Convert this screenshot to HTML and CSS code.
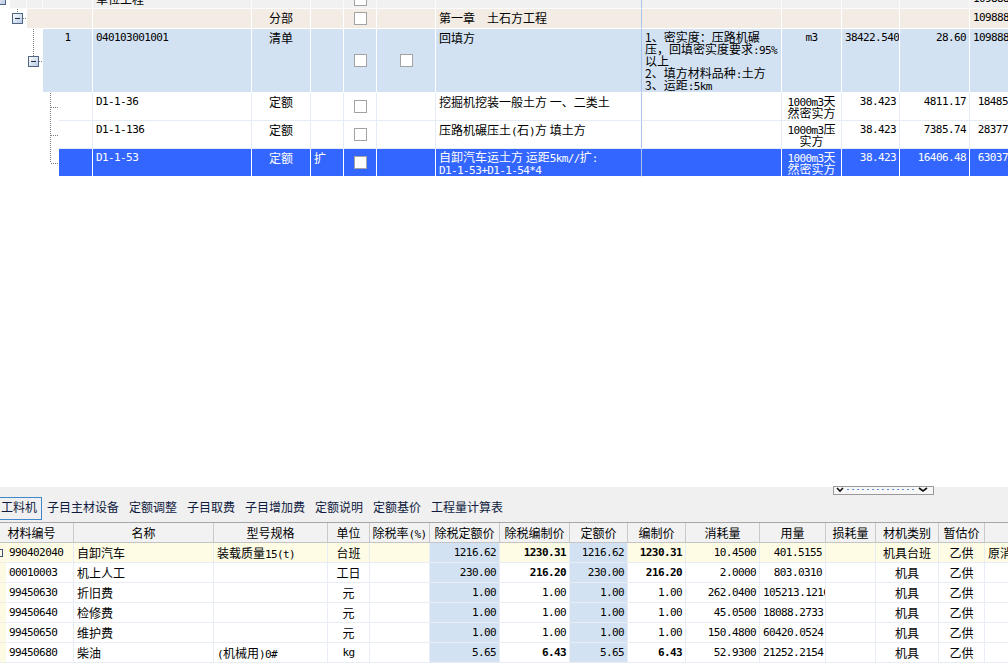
FILE: index.html
```html
<!DOCTYPE html>
<html lang="zh-CN">
<head>
<meta charset="utf-8">
<title>分部分项</title>
<link rel="stylesheet" href="styles.css">
</head>
<body>
<div class="screen">
  <div class="tree-grid">
    <div class="row r0 h19">
      <div class="t"><svg width="10" height="19"><defs><linearGradient id="g0" x1="0" y1="0" x2="1" y2="1"><stop offset="0" stop-color="#ffffff"/><stop offset="1" stop-color="#b6c8e2"/></linearGradient></defs><rect x="-4.5" y="4.5" width="10" height="10" fill="url(#g0)" stroke="#4f6584"/><line x1="-1" y1="9.5" x2="4" y2="9.5" stroke="#1c2a48"/></svg></div>
      <div class="c"></div>
      <div class="c"></div>
      <div class="c s2"></div>
      <div class="c">单位工程</div>
      <div class="c"></div>
      <div class="c"></div>
      <div class="c cbc"><span class="cb"></span></div>
      <div class="c"></div>
      <div class="c dl"></div>
      <div class="c"></div>
      <div class="c"></div>
      <div class="c"></div>
      <div class="c"></div>
      <div class="c rt a">1098884.64</div>
    </div>
    <div class="row r1 h20">
      <div class="t s2"><svg width="27" height="20"><defs><linearGradient id="g1" x1="0" y1="0" x2="1" y2="1"><stop offset="0" stop-color="#ffffff"/><stop offset="1" stop-color="#b6c8e2"/></linearGradient></defs><line x1="17.5" y1="0" x2="17.5" y2="4" class="dot"/><rect x="12.5" y="4.5" width="10" height="10" fill="url(#g1)" stroke="#4f6584"/><line x1="15" y1="9.5" x2="20" y2="9.5" stroke="#1c2a48"/><line x1="23" y1="9.5" x2="27" y2="9.5" class="dot"/></svg></div>
      <div class="c s3"></div>
      <div class="c"></div>
      <div class="c ct">分部</div>
      <div class="c"></div>
      <div class="c cbc"><span class="cb"></span></div>
      <div class="c"></div>
      <div class="c dl">第一章　土石方工程</div>
      <div class="c"></div>
      <div class="c"></div>
      <div class="c"></div>
      <div class="c"></div>
      <div class="c rt a">1098884.64</div>
    </div>
    <div class="row r2 h64">
      <div class="t s3"><svg width="43" height="64"><defs><linearGradient id="g2" x1="0" y1="0" x2="1" y2="1"><stop offset="0" stop-color="#ffffff"/><stop offset="1" stop-color="#b6c8e2"/></linearGradient></defs><line x1="33.5" y1="0" x2="33.5" y2="27" class="dot"/><rect x="28.5" y="27.5" width="10" height="10" fill="url(#g2)" stroke="#4f6584"/><line x1="31" y1="32.5" x2="36" y2="32.5" stroke="#1c2a48"/><line x1="39" y1="32.5" x2="43" y2="32.5" class="dot"/></svg></div>
      <div class="c s2 ct a">1</div>
      <div class="c a">040103001001</div>
      <div class="c ct">清单</div>
      <div class="c"></div>
      <div class="c cbc"><span class="cb"></span></div>
      <div class="c cbc"><span class="cb"></span></div>
      <div class="c dl">回填方</div>
      <div class="c ml"><span class="ln">1、密实度：压路机碾</span><span class="ln">压，回填密实度要求<span class="a">:95%</span></span><span class="ln">以上</span><span class="ln">2、填方材料品种<span class="a">:</span>土方</span><span class="ln">3、运距<span class="a">:5km</span></span></div>
      <div class="c ct a">m3</div>
      <div class="c rt a">38422.540</div>
      <div class="c rt a">28.60</div>
      <div class="c rt a">1098884.64</div>
    </div>
    <div class="row rw h28">
      <div class="t s4"><svg width="59" height="28"><line x1="50.5" y1="0" x2="50.5" y2="28" class="dot"/><line x1="51" y1="14.5" x2="58" y2="14.5" class="dot"/></svg></div>
      <div class="c"></div>
      <div class="c a">D1-1-36</div>
      <div class="c ct">定额</div>
      <div class="c"></div>
      <div class="c cbc"><span class="cb"></span></div>
      <div class="c"></div>
      <div class="c dl">挖掘机挖装一般土方 一、二类土</div>
      <div class="c"></div>
      <div class="c ct ml"><span class="ln"><span class="a">1000m3</span>天</span><span class="ln">然密实方</span></div>
      <div class="c rt a">38.423</div>
      <div class="c rt a">4811.17</div>
      <div class="c rt a">184859.58</div>
    </div>
    <div class="row rw h28">
      <div class="t s4"><svg width="59" height="28"><line x1="50.5" y1="0" x2="50.5" y2="28" class="dot"/><line x1="51" y1="14.5" x2="58" y2="14.5" class="dot"/></svg></div>
      <div class="c"></div>
      <div class="c a">D1-1-136</div>
      <div class="c ct">定额</div>
      <div class="c"></div>
      <div class="c cbc"><span class="cb"></span></div>
      <div class="c"></div>
      <div class="c dl">压路机碾压土<span class="a">(</span>石<span class="a">)</span>方 填土方</div>
      <div class="c"></div>
      <div class="c ct ml"><span class="ln"><span class="a">1000m3</span>压</span><span class="ln">实方</span></div>
      <div class="c rt a">38.423</div>
      <div class="c rt a">7385.74</div>
      <div class="c rt a">283772.29</div>
    </div>
    <div class="row rs h28">
      <div class="t s4"><svg width="59" height="28"><line x1="50.5" y1="0" x2="50.5" y2="14" class="dot"/><line x1="51" y1="14.5" x2="58" y2="14.5" class="dot"/></svg></div>
      <div class="c"></div>
      <div class="c a">D1-1-53</div>
      <div class="c ct">定额</div>
      <div class="c">扩</div>
      <div class="c cbc"><span class="cb"></span></div>
      <div class="c"></div>
      <div class="c dl ml"><span class="ln">自卸汽车运土方 运距<span class="a">5km//</span>扩<span class="a">:</span></span><span class="ln"><span class="a">D1-1-53+D1-1-54*4</span></span></div>
      <div class="c"></div>
      <div class="c ct ml"><span class="ln"><span class="a">1000m3</span>天</span><span class="ln">然密实方</span></div>
      <div class="c rt a">38.423</div>
      <div class="c rt a">16406.48</div>
      <div class="c rt a">630374.18</div>
    </div>
  </div>

  <div class="blank"></div>

  <div class="panel">
    <div class="splitter">
      <svg width="99" height="7"><polyline points="3,1 6,4 9,1" class="chev"/><line x1="13" y1="2.5" x2="80" y2="2.5" class="dots"/><polyline points="85,1 89,4 93,1" class="chev"/></svg>
    </div>
    <div class="tabs">
      <span class="tab on">工料机</span>
      <span class="tab">子目主材设备</span>
      <span class="tab">定额调整</span>
      <span class="tab">子目取费</span>
      <span class="tab">子目增加费</span>
      <span class="tab">定额说明</span>
      <span class="tab">定额基价</span>
      <span class="tab">工程量计算表</span>
    </div>
    <div class="mgrid">
      <div class="mrow mhead">
        <div class="hc s2 first">材料编号</div>
        <div class="hc">名称</div>
        <div class="hc">型号规格</div>
        <div class="hc">单位</div>
        <div class="hc">除税率<span class="a">(%)</span></div>
        <div class="hc">除税定额价</div>
        <div class="hc">除税编制价</div>
        <div class="hc">定额价</div>
        <div class="hc">编制价</div>
        <div class="hc">消耗量</div>
        <div class="hc">用量</div>
        <div class="hc">损耗量</div>
        <div class="hc">材机类别</div>
        <div class="hc">暂估价</div>
        <div class="hc"></div>
      </div>
      <div class="mrow cur">
        <div class="ind"><i class="mark"></i></div>
        <div class="d a">990402040</div>
        <div class="d">自卸汽车</div>
        <div class="d">装载质量<span class="a">15(t)</span></div>
        <div class="d ct">台班</div>
        <div class="d"></div>
        <div class="d rt a blu">1216.62</div>
        <div class="d rt a b">1230.31</div>
        <div class="d rt a blu">1216.62</div>
        <div class="d rt a b">1230.31</div>
        <div class="d rt a">10.4500</div>
        <div class="d rt a">401.5155</div>
        <div class="d"></div>
        <div class="d ct">机具台班</div>
        <div class="d ct">乙供</div>
        <div class="d">原消耗量</div>
      </div>
      <div class="mrow">
        <div class="ind"></div>
        <div class="d a">00010003</div>
        <div class="d">机上人工</div>
        <div class="d"></div>
        <div class="d ct">工日</div>
        <div class="d"></div>
        <div class="d rt a blu">230.00</div>
        <div class="d rt a b">216.20</div>
        <div class="d rt a blu">230.00</div>
        <div class="d rt a b">216.20</div>
        <div class="d rt a">2.0000</div>
        <div class="d rt a">803.0310</div>
        <div class="d"></div>
        <div class="d ct">机具</div>
        <div class="d ct">乙供</div>
        <div class="d"></div>
      </div>
      <div class="mrow">
        <div class="ind"></div>
        <div class="d a">99450630</div>
        <div class="d">折旧费</div>
        <div class="d"></div>
        <div class="d ct">元</div>
        <div class="d"></div>
        <div class="d rt a blu">1.00</div>
        <div class="d rt a">1.00</div>
        <div class="d rt a blu">1.00</div>
        <div class="d rt a">1.00</div>
        <div class="d rt a">262.0400</div>
        <div class="d rt a">105213.1216</div>
        <div class="d"></div>
        <div class="d ct">机具</div>
        <div class="d ct">乙供</div>
        <div class="d"></div>
      </div>
      <div class="mrow">
        <div class="ind"></div>
        <div class="d a">99450640</div>
        <div class="d">检修费</div>
        <div class="d"></div>
        <div class="d ct">元</div>
        <div class="d"></div>
        <div class="d rt a blu">1.00</div>
        <div class="d rt a">1.00</div>
        <div class="d rt a blu">1.00</div>
        <div class="d rt a">1.00</div>
        <div class="d rt a">45.0500</div>
        <div class="d rt a">18088.2733</div>
        <div class="d"></div>
        <div class="d ct">机具</div>
        <div class="d ct">乙供</div>
        <div class="d"></div>
      </div>
      <div class="mrow">
        <div class="ind"></div>
        <div class="d a">99450650</div>
        <div class="d">维护费</div>
        <div class="d"></div>
        <div class="d ct">元</div>
        <div class="d"></div>
        <div class="d rt a blu">1.00</div>
        <div class="d rt a">1.00</div>
        <div class="d rt a blu">1.00</div>
        <div class="d rt a">1.00</div>
        <div class="d rt a">150.4800</div>
        <div class="d rt a">60420.0524</div>
        <div class="d"></div>
        <div class="d ct">机具</div>
        <div class="d ct">乙供</div>
        <div class="d"></div>
      </div>
      <div class="mrow">
        <div class="ind"></div>
        <div class="d a">99450680</div>
        <div class="d">柴油</div>
        <div class="d"><span class="a">(</span>机械用<span class="a">)0#</span></div>
        <div class="d ct a">kg</div>
        <div class="d"></div>
        <div class="d rt a blu">5.65</div>
        <div class="d rt a b">6.43</div>
        <div class="d rt a blu">5.65</div>
        <div class="d rt a b">6.43</div>
        <div class="d rt a">52.9300</div>
        <div class="d rt a">21252.2154</div>
        <div class="d"></div>
        <div class="d ct">机具</div>
        <div class="d ct">乙供</div>
        <div class="d"></div>
      </div>
    </div>
  </div>
</div>
</body>
</html>
```

FILE: styles.css
```css
* { box-sizing: border-box; }
html, body { margin: 0; padding: 0; }
body {
  width: 1008px;
  height: 669px;
  overflow: hidden;
  background: #ffffff;
  color: #000000;
  font: 12px/14px "Noto Sans CJK SC", "DejaVu Sans", sans-serif;
}
.screen {
  display: flex;
  flex-direction: column;
  height: 669px;
  overflow: hidden;
}

/* ---------- top tree grid ---------- */
.tree-grid {
  flex: none;
  width: 1036px;
  margin-top: -10px;
}
.row {
  display: grid;
  grid-template-columns: 10px 17px 16px 16px 34px 159px 59px 33px 33px 59px 206px 140px 60px 58px 70px 66px;
}
.h19 { height: 19px; }
.h20 { height: 20px; }
.h28 { height: 28px; }
.h64 { height: 64px; }
.s2 { grid-column: span 2; }
.s3 { grid-column: span 3; }
.s4 { grid-column: span 4; }

.t { background: #ffffff; overflow: hidden; }
.t svg { display: block; }
.dot { stroke: #7c7c7c; stroke-width: 1; stroke-dasharray: 1 1; }

.c {
  border-right: 1px solid #e6ecf5;
  border-bottom: 1px solid #e6ecf5;
  padding: 2px 3px 0;
  white-space: nowrap;
  overflow: hidden;
}
.c.dl { border-right-color: #a9c4ea; }
.c.ml { padding-top: 2px; }
.ln {
  display: block;
  height: 12px;
  line-height: 12px;
}
.ln .a { line-height: 0; }

.r0 .c { background: #f1f1f1; border-color: #fbfbfb; }
.r0 .c.dl { border-right-color: #a9c4ea; }
.r1 .c { background: #f3ece5; border-color: #ffffff; }
.r1 .c.dl { border-right-color: #a9c4ea; }
.r2 .c { background: #d3e2f2; border-color: #ffffff; }
.r2 .c.dl { border-right-color: #a9c4ea; }
.rw .c { background: #ffffff; }
.rs .c { background: #3366ff; color: #ffffff; border-color: #ffffff; }
.rs .c.dl { border-right-color: #a9c4ea; }

.ct { text-align: center; }
.rt { text-align: right; }
.a {
  font-family: "DejaVu Sans Mono", "Noto Sans CJK SC", monospace;
  font-size: 11px;
  letter-spacing: -0.6px;
}
.b { font-weight: bold; }

.cbc {
  display: flex;
  align-items: center;
  justify-content: center;
  padding: 0;
}
.cb {
  display: block;
  width: 13px;
  height: 13px;
  border: 1px solid #a3a3a3;
  background: #ffffff;
}

.blank { flex: 1; }

/* ---------- bottom panel ---------- */
.panel {
  flex: none;
  height: 182px;
  background: #f0f0f0;
  position: relative;
  display: flex;
  flex-direction: column;
}
.splitter {
  position: absolute;
  left: 833px;
  top: -1px;
  width: 101px;
  height: 9px;
  border: 1px solid #9a9a9a;
  background: #f7f7f7;
}
.splitter svg { display: block; }
.chev { fill: none; stroke: #111111; stroke-width: 1.6; }
.dots { stroke: #5a8fd8; stroke-width: 1; stroke-dasharray: 2 3; }

.tabs {
  flex: none;
  height: 35px;
  padding-top: 10px;
  display: flex;
  align-items: flex-start;
  color: #0e1a40;
}
.tab {
  display: block;
  border: 1px solid transparent;
  padding: 2px 4px 5px;
  line-height: 14px;
  white-space: nowrap;
}
.tab:first-child { margin-left: -4px; }
.tab.on { border-color: #3f88cc; }

.mgrid {
  flex: 1;
  border-top: 1px solid #a7a7a7;
  background: #ffffff;
  width: 1045px;
}
.mrow {
  display: grid;
  grid-template-columns: 6px 68px 140px 114px 42px 60px 70px 70px 58px 58px 74px 66px 50px 63px 46px 60px;
  height: 20px;
}
.hc {
  background: #f2f2f2;
  border-right: 1px solid #c9c9c9;
  border-bottom: 1px solid #c4c4c4;
  text-align: center;
  line-height: 19px;
  white-space: nowrap;
  overflow: hidden;
}
.hc.first { padding-right: 10px; }
.d {
  border-right: 1px solid #e8edf5;
  border-bottom: 1px solid #e8edf5;
  padding: 0 3px;
  line-height: 19px;
  white-space: nowrap;
  overflow: hidden;
}
.cur .d { background: #fffce6; }
.d.blu, .cur .d.blu { background: #d3e2f2; }
.ind {
  background: #fdfae4;
  border-bottom: 1px solid #eef0e6;
  position: relative;
}
.mark {
  display: block;
  width: 3px;
  height: 8px;
  margin-top: 6px;
  border: 1px solid #3e5279;
  border-left: none;
}
```
